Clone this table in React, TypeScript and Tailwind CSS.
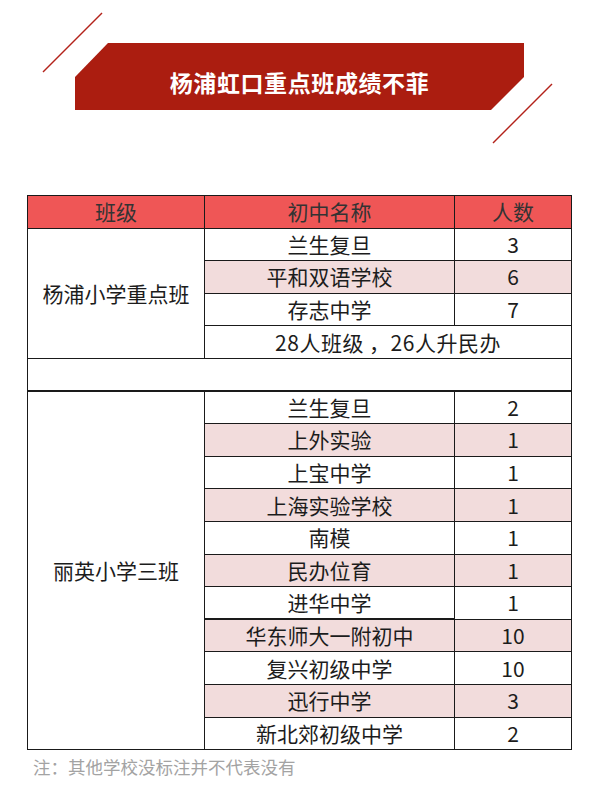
import type { ReactNode } from 'react';

const upper = [
  { school: '兰生复旦', count: '3', pink: false },
  { school: '平和双语学校', count: '6', pink: true },
  { school: '存志中学', count: '7', pink: false },
];

const lower = [
  { school: '兰生复旦', count: '2', pink: false },
  { school: '上外实验', count: '1', pink: true },
  { school: '上宝中学', count: '1', pink: false },
  { school: '上海实验学校', count: '1', pink: true },
  { school: '南模', count: '1', pink: false },
  { school: '民办位育', count: '1', pink: true },
  { school: '进华中学', count: '1', pink: false },
  { school: '华东师大一附初中', count: '10', pink: true },
  { school: '复兴初级中学', count: '10', pink: false },
  { school: '迅行中学', count: '3', pink: true },
  { school: '新北郊初级中学', count: '2', pink: false },
];

function Cell({
  children,
  className = '',
  rowSpan,
  colSpan,
}: {
  children?: ReactNode;
  className?: string;
  rowSpan?: number;
  colSpan?: number;
}) {
  return (
    <td
      rowSpan={rowSpan}
      colSpan={colSpan}
      className={`border border-[#1a1a1a] h-[32.6px] p-0 text-center align-middle leading-none whitespace-nowrap ${className}`}
    >
      {children}
    </td>
  );
}

export default function App() {
  return (
    <div className="w-[599px] h-[800px] bg-white overflow-hidden font-['Noto_Sans_CJK_SC','Noto_Sans',sans-serif]">
      {/* title banner */}
      <div className="relative h-[195px]">
        <svg className="absolute inset-0 pointer-events-none" width="599" height="195">
          <line x1="43" y1="72" x2="102" y2="13" stroke="#b3221a" strokeWidth="1.4" />
          <line x1="493" y1="143" x2="552" y2="84" stroke="#b3221a" strokeWidth="1.4" />
        </svg>
        <div className="pt-[43px] pl-[75px]">
          <div className="w-[449px] h-[67px] bg-[#ab1d10] flex items-center justify-center [clip-path:polygon(33px_0,100%_0,100%_34px,calc(100%-33px)_100%,0_100%,0_34px)]">
            <span className="text-white text-[23px] font-bold tracking-[0.6px] mt-[12px] leading-none">杨浦虹口重点班成绩不菲</span>
          </div>
        </div>
      </div>

      {/* table */}
      <table className="ml-[27px] w-[544px] table-fixed border-collapse text-[21px] text-[#1c1c1c]">
        <colgroup>
          <col className="w-[177px]" />
          <col className="w-[250px]" />
          <col className="w-[117px]" />
        </colgroup>
        <thead>
          <tr className="bg-[#ef5656] text-[#333]">
            <Cell>班级</Cell>
            <Cell>初中名称</Cell>
            <Cell>人数</Cell>
          </tr>
        </thead>
        <tbody>
          {upper.map((r, i) => (
            <tr key={r.school} className={r.pink ? 'bg-[#f2dcdc]' : ''}>
              {i === 0 && (
                <Cell rowSpan={4} className="bg-white">
                  杨浦小学重点班
                </Cell>
              )}
              <Cell>{r.school}</Cell>
              <Cell>{r.count}</Cell>
            </tr>
          ))}
          <tr>
            <Cell colSpan={2}>
              <span className="tracking-[0.5px]">28人班级 ，26人升民办</span>
            </Cell>
          </tr>
          <tr>
            <Cell colSpan={3} className="border-b-2" />
          </tr>
          {lower.map((r, i) => (
            <tr key={r.school} className={r.pink ? 'bg-[#f2dcdc]' : ''}>
              {i === 0 && (
                <Cell rowSpan={11} className="border-t-2 bg-white">
                  丽英小学三班
                </Cell>
              )}
              <Cell className={i === 0 || i === 7 ? 'border-t-2' : ''}>{r.school}</Cell>
              <Cell className={i === 0 ? 'border-t-2' : ''}>{r.count}</Cell>
            </tr>
          ))}
        </tbody>
      </table>

      <p className="ml-[33px] mt-[8px] text-[17.5px] leading-none text-[#a3a3a3]">注：其他学校没标注并不代表没有</p>
    </div>
  );
}
